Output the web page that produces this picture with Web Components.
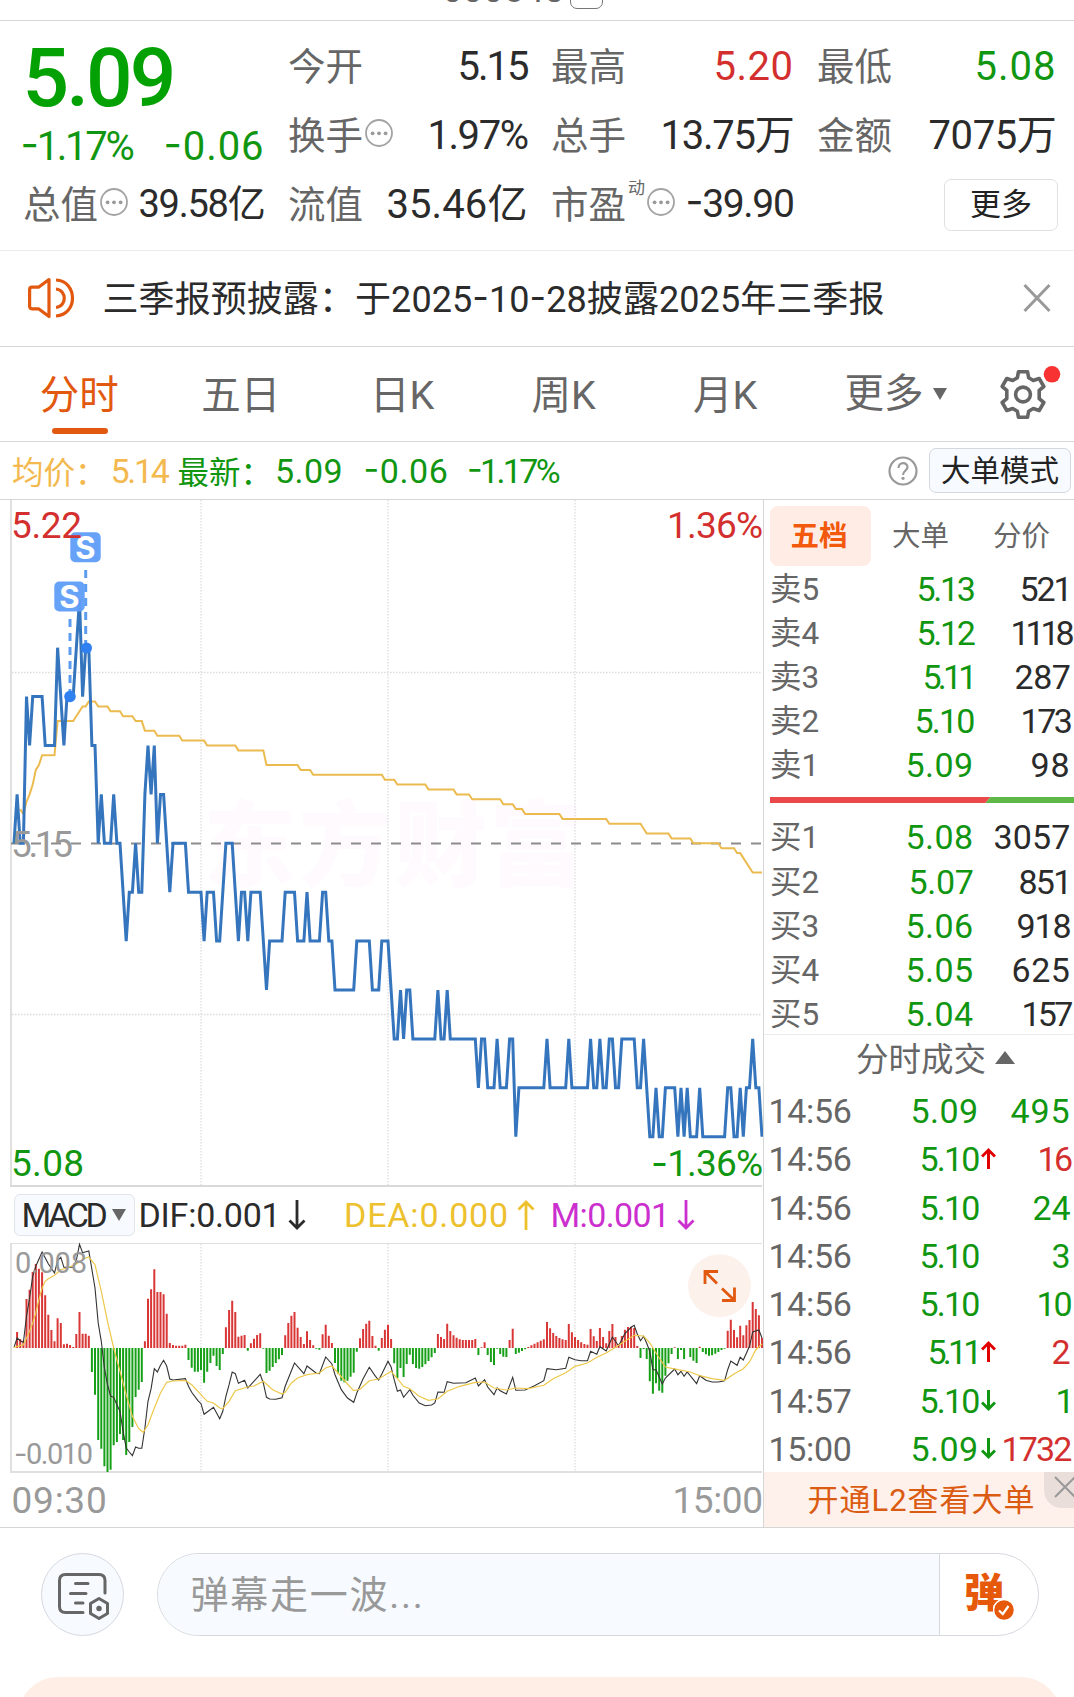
<!DOCTYPE html>
<html lang="zh-CN">
<head>
<meta charset="utf-8">
<title>分时</title>
<style>
html, body {
  margin: 0;
  padding: 0;
}
body {
  width: 1074px;
  height: 1697px;
  overflow: hidden;
  background: #fff;
  color: #2b2b2b;
  font-family: Roboto, "Noto Sans CJK SC", sans-serif;
  --up: #d32f2f;
  --down: #119611;
  --accent: #e2580f;
  --muted: #666;
  --faint: #999;
  --line: #d6d6d6;
  --panel: #f7faff;
}
</style>
</head>
<body>
<stock-page></stock-page>

<script>
// Text set to a fixed width by adjusting the tracking.
class FitText extends HTMLElement {

  static TAG = 'fit-text';

  constructor() {
    super();
    this.attachShadow({mode: 'open'});
    this.shadowRoot.innerHTML = '<style>:host { display: inline-block; white-space: nowrap; margin: 0 -1.5px; flex: none; }</style><slot></slot>';
  }

  connectedCallback() {
    this.widenMinus();
    const target = Number(this.getAttribute('w')) + 3;
    const natural = this.getBoundingClientRect().width;
    const count = [...this.textContent].length;
    this.style.letterSpacing = `${((target - natural) / count).toFixed(3)}px`;
  }

  // Roboto's hyphen is too short for a minus sign
  widenMinus() {
    if (!this.textContent.includes('-')) {
      return;
    }
    this.innerHTML = this.textContent.replace(/-/g, '<span style="font-family: Inter; vertical-align: .05em; line-height: 1">-</span>');
  }
}

class CodeStrip extends HTMLElement {

  static TAG = 'code-strip';

  constructor() {
    super();
    this.attachShadow({mode: 'open'});
    this.shadowRoot.innerHTML = `
<style>
:host { display: flex; height: 20px; border-bottom: 1px solid var(--line); align-items: flex-end; justify-content: center; overflow: hidden; box-sizing: content-box; }
div { display: flex; align-items: flex-end; gap: 7px; padding-bottom: 11px; margin-left: -27px; }
span { font-size: 36px; line-height: 36px; color: var(--muted); margin-bottom: 1px; }
i { width: 31px; height: 30px; border: 1px solid #777; border-radius: 7px; }
</style>
<div><span><fit-text w="119">000548</fit-text></span><i></i></div>`;
  }
}

class MoreDot extends HTMLElement {

  static TAG = 'more-dot';

  constructor() {
    super();
    this.attachShadow({mode: 'open'});
    this.shadowRoot.innerHTML = `
<style>
:host { display: block; width: 28px; height: 29px; }
svg { display: block; }
</style>
<svg width="28" height="29" viewBox="0 0 28 29">
  <circle cx="14" cy="14" r="13" fill="none" stroke="#a3a3a3" stroke-width="1.8"/>
  <g fill="#999"><circle cx="7.6" cy="14.3" r="1.9"/><circle cx="14" cy="14.3" r="1.9"/><circle cx="20.6" cy="14.3" r="1.9"/></g>
</svg>`;
  }
}

class QuoteHeader extends HTMLElement {

  static TAG = 'quote-header';

  constructor() {
    super();
    this.attachShadow({mode: 'open'});
    this.shadowRoot.innerHTML = `
<style>
:host {
  display: grid;
  grid-template-columns: 239px 237px 240px 237px;
  grid-template-rows: 69px 69px 69px;
  column-gap: 26px;
  padding: 11px 19px 11px 24px;
  height: 207px;
  border-bottom: 1px solid #ebebeb;
  font-size: 40px;
  line-height: 71px;
}
.last { grid-row: 1 / 3; }
.price { font-size: 82px; font-weight: 500; color: #04a104; height: 91px; line-height: 92px; }
.change { display: flex; justify-content: space-between; color: var(--down); height: 47px; line-height: 48px; margin-left: -2px; }
.cell { display: flex; align-items: center; justify-content: space-between; height: 69px; }
.label { display: flex; align-items: center; color: var(--muted); font-size: 37.500px; line-height: 72px; gap: 2px; margin-left: -1px; }
.label more-dot { margin-top: -4px; }
sup { font-size: 17px; line-height: 17px; align-self: flex-start; margin: 11px 0 0 0; }
.up { color: var(--up); }
.down { color: var(--down); }
button { margin: 0 -3px 0 auto; width: 114px; height: 52px; padding: 0; border: 1px solid #e0e0e0; border-radius: 7px; background: #fff; color: #222; font: 31px/50px Roboto, "Noto Sans CJK SC", sans-serif; }
</style>
<div class="last">
  <div class="price"><fit-text w="148">5.09</fit-text></div>
  <div class="change"><fit-text w="109">-1.17%</fit-text><fit-text w="98">-0.06</fit-text></div>
</div>
<div class="cell"><span class="label">今开</span><fit-text w="67">5.15</fit-text></div>
<div class="cell"><span class="label">最高</span><fit-text class="up" w="77">5.20</fit-text></div>
<div class="cell"><span class="label">最低</span><fit-text class="down" w="79">5.08</fit-text></div>
<div class="cell"><span class="label">换手<more-dot></more-dot></span><fit-text w="97">1.97%</fit-text></div>
<div class="cell"><span class="label">总手</span><fit-text w="130">13.75万</fit-text></div>
<div class="cell"><span class="label">金额</span><fit-text w="125">7075万</fit-text></div>
<div class="cell"><span class="label">总值<more-dot></more-dot></span><fit-text w="123" style="font-size:38px">39.58亿</fit-text></div>
<div class="cell"><span class="label">流值</span><fit-text w="138">35.46亿</fit-text></div>
<div class="cell"><span class="label">市盈<sup>动</sup><more-dot></more-dot></span><fit-text w="105" style="font-size:39px">-39.90</fit-text></div>
<div class="cell"><button>更多</button></div>`;
  }
}

class StockNotice extends HTMLElement {

  static TAG = 'stock-notice';

  constructor() {
    super();
    this.attachShadow({mode: 'open'});
    this.shadowRoot.innerHTML = `
<style>
:host { display: flex; align-items: center; height: 95px; border-bottom: 1px solid var(--line); padding: 0 22px 0 27px; font-size: 36px; line-height: 50px; }
.text { margin: 2px 0 0 29px; flex: 1; }
svg { margin-top: -2px; }
</style>
<svg width="48" height="42" viewBox="0 0 48 42" fill="none" stroke="#e2580f" stroke-width="3.2" stroke-linejoin="round">
  <path d="M22 2.5 L11.5 10.2 H5 Q2.6 10.2 2.6 12.8 V29 Q2.6 31.8 5 31.8 H11.5 L22 39.5 Z"/>
  <path d="M29 3 C51 4 51 38 29 39"/>
  <path d="M29 12 C40 13 40 29.500 29 30.500"/>
</svg>
<span class="text"><fit-text w="779">三季报预披露：于2025-10-28披露2025年三季报</fit-text></span>
<svg width="30" height="30" viewBox="0 0 30 30" stroke="#999" stroke-width="3"><path d="M2.500 2 L27.500 28 M27.500 2 L2.500 28"/></svg>`;
  }
}

class PeriodTabs extends HTMLElement {

  static TAG = 'period-tabs';

  constructor() {
    super();
    this.attachShadow({mode: 'open'});
    this.shadowRoot.innerHTML = `
<style>
:host { display: flex; height: 94px; border-bottom: 1px solid var(--line); color: var(--muted); font-size: 39.500px; line-height: 98px; }
.tab { width: 161.500px; text-align: center; position: relative; text-indent: -3px; }
.active { color: var(--accent); }
.active::after { content: ''; position: absolute; left: 52px; bottom: 7px; width: 56px; height: 6px; border-radius: 3px; background: var(--accent); }
.more { padding-left: 37px; display: flex; align-items: center; gap: 9px; width: 154px; }
.gear { padding-top: 17px; }
svg { display: block; }
</style>
<div class="tab active">分时</div>
<div class="tab">五日</div>
<div class="tab">日K</div>
<div class="tab">周K</div>
<div class="tab">月K</div>
<div class="more">更多<svg width="14" height="12" viewBox="0 0 14 12"><path d="M0 0H14L7 12Z" fill="#666"/></svg></div>
<svg class="gear" width="64" height="60" viewBox="0 -2 64 60" fill="none" stroke="#666" stroke-width="3.600" stroke-linejoin="round">
  <path d="M19.500 7.200 H28.500 L29.700 13.300 L34.300 16 L40.200 14 L44.800 22 L40.200 25.800 V34.200 L44.800 38 L40.200 46 L34.300 44 L29.700 46.700 L28.500 52.800 H19.500 L18.300 46.700 L13.700 44 L7.800 46 L3.200 38 L7.800 34.200 V25.800 L3.200 22 L7.800 14 L13.700 16 L18.300 13.300 Z" transform="translate(0 -1.500)"/>
  <circle cx="24" cy="28.500" r="7.400"/>
  <circle cx="53" cy="8.300" r="8.300" fill="#f83232" stroke="none"/>
</svg>`;
  }
}

class PriceSummary extends HTMLElement {

  static TAG = 'price-summary';

  constructor() {
    super();
    this.attachShadow({mode: 'open'});
    this.shadowRoot.innerHTML = `
<style>
:host { display: flex; align-items: center; height: 57px; border-bottom: 1px solid var(--line); padding: 0 3px 0 12px; color: var(--down); font-size: 34px; line-height: 57px; }
fit-text { padding-top: 2px; }
.cn { font-size: 31.500px; line-height: 57px; padding-top: 5px; }
.avg { color: #f3b94e; }
.avg + .avg { margin: 0 12px 0 4px; }
.now { margin: 0 22px 0 3px; }
.pct { margin-left: 20px; }
svg { margin-left: auto; }
button { margin-left: 11px; width: 142px; height: 45px; padding: 0; border: 1px solid #d3d7df; border-radius: 7px; background: var(--panel); color: #222; font: 29.500px/44px Roboto, "Noto Sans CJK SC", sans-serif; }
</style>
<span class="cn avg">均价：</span><fit-text class="avg" w="54">5.14</fit-text>
<span class="cn" style="margin-left:-2px">最新：</span><fit-text class="now" w="65">5.09</fit-text>
<fit-text w="82">-0.06</fit-text><fit-text class="pct" w="88">-1.17%</fit-text>
<svg width="30" height="30" viewBox="0 0 30 30" fill="none" stroke="#999" stroke-width="2.200">
  <circle cx="15" cy="15" r="13.500"/>
  <path d="M10.500 12 C10.500 5.500 19.500 5.800 19.500 11.300 C19.500 14.500 15 14.600 15 19"/>
  <circle cx="15" cy="22.300" r="1.600" fill="#999" stroke="none"/>
</svg>
<button>大单模式</button>`;
  }
}

// One slot per trading minute, 09:30 to 15:00.
const MINUTE = 3.1167;
const minuteX = i => (14 + i * MINUTE).toFixed(1);

// [minute, cents from previous close]
const PRICE = [
  [0,0],[1,1],[2,0],[3,0],[4,3],[5,2],[6,3],[9,3],[10,2],[13,2],[14,4],[16,2],[17,3],[19,3],[21,5],[22,3],
  [23,4],[24,4],[25,2],[26,2],[27,0],[28,1],[29,0],[31,0],[32,1],[33,0],[34,0],[36,-2],[37,-1],[38,-1],[39,0],
  [40,-1],[41,-1],[42,1],[43,2],[44,1],[45,2],[46,0],[47,1],[48,1],[49,0],[50,-1],[51,0],[55,0],[56,-1],[60,-1],
  [61,-2],[62,-1],[64,-1],[65,-2],[66,-2],[68,0],[70,0],[72,-2],[73,-1],[74,-1],[75,-2],[76,-1],[79,-1],[81,-3],
  [82,-2],[86,-2],[87,-1],[90,-1],[91,-2],[93,-2],[94,-1],[95,-2],[98,-2],[99,-1],[100,-1],[101,-2],[102,-2],
  [103,-3],[109,-3],[110,-2],[114,-2],[115,-3],[117,-3],[118,-2],[120,-2],[122,-4],[123,-4],[124,-3],[125,-4],
  [126,-3],[127,-3],[128,-4],[135,-4],[136,-3],[137,-4],[138,-4],[139,-3],[140,-4],[148,-4],[149,-5],[150,-4],
  [151,-4],[152,-5],[154,-5],[155,-4],[156,-5],[158,-5],[159,-4],[160,-4],[161,-6],[162,-5],[170,-5],[171,-4],
  [172,-5],[177,-5],[178,-4],[179,-5],[184,-5],[185,-4],[186,-5],[187,-5],[188,-4],[189,-5],[190,-5],[191,-4],
  [192,-4],[193,-5],[194,-5],[195,-4],[199,-4],[200,-5],[201,-5],[202,-4],[204,-6],[205,-6],[206,-5],[207,-6],
  [208,-6],[209,-5],[212,-5],[213,-6],[214,-5],[215,-6],[216,-5],[217,-6],[219,-6],[220,-5],[221,-6],[228,-6],
  [229,-5],[230,-5],[231,-6],[232,-6],[233,-5],[234,-6],[235,-5],[236,-5],[237,-4],[238,-5],[239,-5],[240,-6]
];

// [minute, thousandths from previous close]
const AVERAGE = [
  [2,7],[3,6],[4,8.5],[5,10],[6,12],[7,15],[8,16],[9,18],[13,18],[14,25],[19,25],[22,28],[23,28],[24,29],[26,29],
  [27,28],[30,28],[31,27],[34,27],[35,26],[38,26],[39,25],[41,25],[42,23],[45,23],[46,22],[53,22],[54,21],[61,21],
  [62,20],[71,20],[72,19],[80,19],[81,16],[91,16],[92,15],[95,15],[96,14],[118,14],[119,13],[122,13],[123,12],
  [132,12],[133,11],[141,11],[142,10],[146,10],[147,9],[156,9],[157,8],[160,8],[161,7],[163,7],[164,6],[175,6],
  [176,5],[190,5],[191,4],[201,4],[203,2],[210,2],[211,1],[217,1],[218,0],[226,0],[227,-1],[231,-1],[232,-2],
  [233,-2],[237,-6],[240,-6]
];

class MinuteChart extends HTMLElement {

  static TAG = 'minute-chart';

  constructor() {
    super();
    this.attachShadow({mode: 'open'});
    this.shadowRoot.innerHTML = `
<style>
:host { display: block; height: 687px; }
svg { display: block; font-size: 37px; }
</style>
<svg width="763" height="687" viewBox="0 0 763 687">
  <text x="203" y="379" font-size="93" font-weight="900" fill="#fefafe" textLength="380" font-family="'Noto Sans CJK SC'">东方财富</text>
  <g stroke="#dcdcdc" stroke-width="1.300" stroke-dasharray="1.500 1.500">
    <path d="M201 0V686M388 0V686M575 0V686"/>
    <path d="M12 172.500H762M12 514.500H762"/>
  </g>
  <path d="M11 0V687" stroke="#e0e0e0" stroke-width="2"/>
  <path d="M10 686H762" stroke="#d9d9d9" stroke-width="2"/>
  <path d="M11 343.500H762" stroke="#8c8c8c" stroke-width="2" stroke-dasharray="10 10"/>
  <polyline class="avg" fill="none" stroke="#ecbb50" stroke-width="2"/>
  <polyline class="price" fill="none" stroke="#3575bd" stroke-width="3"/>
  <g stroke="#5c9df0" stroke-width="3" stroke-dasharray="8 6">
    <path d="M85.700 70V146M70 119V195"/>
  </g>
  <g fill="#2f80f0"><circle cx="86.500" cy="148" r="5.500"/><circle cx="70" cy="196.500" r="5.800"/></g>
  <g fill="#5f9df9" fill-opacity=".95">
    <rect x="70.300" y="32.300" width="30.400" height="30" rx="5"/>
    <rect x="54.300" y="81.500" width="30.400" height="30" rx="5"/>
  </g>
  <g fill="#fff" font-family="Inter" font-weight="700" font-size="31" text-anchor="middle">
    <text x="85.500" y="58.500">S</text><text x="69.500" y="107.500">S</text>
  </g>
  <g fill="#d32f2f">
    <text x="11" y="38" textLength="71">5.22</text>
    <text x="667" y="38" textLength="96">1.36%</text>
  </g>
  <text x="11" y="357" fill="#999" textLength="62">5.15</text>
  <g fill="#119611">
    <text x="11" y="676" textLength="73">5.08</text>
    <text x="651" y="676" textLength="112"><tspan font-family="Inter">-</tspan>1.36%</text>
  </g>
</svg>`;
    this.plot('.price', PRICE, 48.9);
    this.plot('.avg', AVERAGE, 4.89);
  }

  plot(selector, data, step) {
    const points = data.map(([i, v]) => `${minuteX(i)},${(343.3 - v * step).toFixed(1)}`);
    this.shadowRoot.querySelector(selector).setAttribute('points', points.join(' '));
  }
}

// Histogram heights, three units to a pixel, one per minute.
const BARS = [
  0,48,27,22,147,175,228,252,238,227,158,100,54,20,89,75,11,13,9,3,42,108,43,43,37,-72,-140,-276,-302,-355,
  -372,-365,-292,-282,-258,-276,-321,-282,-237,-147,-125,-102,20,148,176,236,168,168,161,103,15,9,7,7,7,10,-36,-59,-71,-71,
  -66,-104,-71,-45,-23,-54,-66,-18,62,114,142,108,34,37,39,-8,14,28,39,44,-2,-75,-68,-57,-45,-34,-21,38,75,97,
  108,61,33,12,50,24,8,-2,-5,41,70,37,15,-45,-77,-98,-103,-98,-86,-74,-11,29,57,73,82,36,7,-8,30,55,
  70,27,-46,-90,-60,-87,-48,-20,-48,-60,-62,-57,-49,-39,-28,-15,42,33,27,73,51,38,31,26,24,24,24,24,27,-21,
  2,17,-21,-42,-51,-2,-18,-26,-27,24,58,-18,-14,-9,-4,3,8,13,17,22,26,78,59,45,36,30,26,24,72,47,
  33,24,17,12,10,57,35,21,60,33,14,51,72,33,12,36,55,63,64,60,6,-30,-3,-33,-100,-137,-106,-128,-134,-83,
  -46,-18,2,-33,-6,-33,0,-27,-38,-45,4,-12,-19,-23,-22,-17,-12,-6,-2,52,85,54,32,67,38,68,84,138,117,98,30
];

const DIF = [
  [0,2],[1,30],[2,22],[3,17],[4,95],[5,150],[6,215],[7,245],[9,288],[11,253],[13,225],[14,262],[15,272],[16,242],
  [19,242],[20,262],[21,311],[22,286],[24,291],[26,180],[27,75],[28,20],[29,-60],[30,-110],[31,-144],[32,-148],
  [33,-170],[34,-190],[35,-250],[36,-300],[37,-312],[38,-323],[39,-297],[40,-301],[41,-301],[42,-240],[43,-160],
  [44,-122],[45,-62],[46,-72],[47,-52],[48,-37],[49,-54],[50,-93],[51,-96],[55,-92],[56,-115],[57,-133],[59,-158],
  [60,-167],[61,-199],[62,-192],[64,-178],[66,-212],[67,-190],[68,-145],[69,-110],[70,-72],[71,-77],[72,-106],
  [74,-97],[75,-120],[76,-110],[79,-79],[80,-105],[81,-148],[82,-153],[84,-154],[86,-149],[87,-115],[90,-45],
  [93,-77],[94,-54],[97,-76],[98,-77],[100,-27],[102,-48],[103,-80],[105,-125],[107,-150],[109,-163],[110,-135],
  [112,-92],[114,-58],[116,-85],[117,-96],[118,-78],[120,-40],[121,-57],[122,-95],[123,-130],[124,-126],[125,-148],
  [127,-125],[128,-142],[130,-165],[132,-173],[134,-171],[135,-165],[136,-132],[138,-133],[139,-101],[141,-106],
  [145,-104],[148,-90],[149,-114],[151,-95],[152,-117],[154,-140],[155,-120],[156,-128],[158,-138],[160,-88],
  [161,-127],[164,-126],[167,-113],[170,-98],[171,-62],[174,-65],[177,-61],[178,-28],[180,-35],[182,-38],[184,-38],
  [185,-10],[187,-19],[188,4],[190,-9],[192,33],[194,7],[196,43],[198,62],[199,68],[200,42],[201,22],[202,35],
  [203,14],[204,-10],[205,-65],[206,-65],[208,-108],[209,-90],[212,-63],[213,-80],[214,-70],[215,-85],[216,-72],
  [219,-107],[220,-83],[222,-97],[224,-102],[226,-102],[228,-98],[229,-65],[230,-39],[232,-52],[233,-28],[234,-36],
  [236,5],[237,48],[239,54],[240,30]
];

const DEA = [
  [0,2],[3,10],[4,30],[5,50],[6,75],[7,105],[8,145],[9,180],[10,200],[11,208],[13,218],[15,235],[17,240],[20,252],
  [23,270],[24,273],[26,250],[28,170],[30,80],[32,0],[34,-70],[36,-140],[38,-205],[40,-242],[41.5,-253],[43,-230],
  [45,-180],[47,-135],[49,-103],[51,-99],[55,-97],[57,-110],[59,-130],[62,-160],[64,-165],[66,-180],[67,-182],
  [69,-160],[71,-128],[75,-117],[77,-114],[80,-100],[83,-125],[86,-138],[87,-133],[89,-105],[91,-90],[94,-80],
  [98,-75],[100,-60],[102,-54],[104,-75],[107,-108],[109,-128],[111,-124],[114,-98],[117,-93],[121,-70],[123,-92],
  [125,-115],[127,-122],[130,-145],[133,-157],[136,-153],[139,-130],[143,-115],[148,-103],[151,-102],[154,-120],
  [158,-126],[161,-120],[165,-122],[170,-112],[173,-92],[177,-74],[180,-55],[184,-45],[187,-28],[190,-15],[193,2],
  [196,20],[199,38],[202,36],[204,15],[207,-30],[209,-57],[213,-65],[217,-72],[220,-83],[224,-92],[228,-97],
  [231,-78],[234,-62],[236,-42],[238,-5],[240,12]
];

class MacdChart extends HTMLElement {

  static TAG = 'macd-chart';

  constructor() {
    super();
    this.attachShadow({mode: 'open'});
    this.shadowRoot.innerHTML = `
<style>
:host { display: block; }
header { display: flex; align-items: center; height: 55px; padding-left: 14px; font-size: 34px; line-height: 54px; }
.pick { display: flex; align-items: center; justify-content: center; gap: 9px; box-sizing: border-box; width: 121px; height: 42px; margin-right: 5px; border: 1px solid #e1e4ea; border-radius: 6px; background: var(--panel); }
header > svg { margin-left: 9px; }
.dea { color: #edc12d; margin-left: 38px; }
.m { color: #cb30cf; margin-left: 16px; }
svg { display: block; }
footer { display: flex; justify-content: space-between; height: 54px; padding: 0 2px 0 13px; color: var(--faint); font-size: 37px; line-height: 55px; }
.plot { font-size: 29px; }
</style>
<header>
  <span class="pick"><fit-text w="80">MACD</fit-text><svg width="14" height="12" viewBox="0 0 14 12"><path d="M0 0H14L7 12Z" fill="#666"/></svg></span>
  <fit-text w="139">DIF:0.001</fit-text>
  <svg width="18" height="32" viewBox="0 0 18 32" fill="none" stroke="#2b2b2b" stroke-width="2.800"><path d="M9 1V29M1.500 21.500L9 29L16.500 21.500"/></svg>
  <fit-text class="dea" w="162">DEA:0.000</fit-text>
  <svg width="18" height="32" viewBox="0 0 18 32" fill="none" stroke="#edc12d" stroke-width="2.800"><path d="M9 31V3M1.500 10.500L9 3L16.500 10.500"/></svg>
  <fit-text class="m" w="116">M:0.001</fit-text>
  <svg width="18" height="32" viewBox="0 0 18 32" fill="none" stroke="#cb30cf" stroke-width="2.800"><path d="M9 1V29M1.500 21.500L9 29L16.500 21.500"/></svg>
</header>
<svg class="plot" width="763" height="231" viewBox="0 0 763 231">
  <path d="M201 2V229M388 2V229M575 2V229" stroke="#dcdcdc" stroke-width="1.300" stroke-dasharray="1.500 1.500"/>
  <path d="M10 1.500H762" stroke="#e0e0e0"/>
  <path d="M11 1V231" stroke="#e0e0e0" stroke-width="2"/>
  <path d="M10 230H762" stroke="#e0e0e0" stroke-width="2"/>
  <circle cx="719.500" cy="43.700" r="31.500" fill="#fdf1ec"/>
  <path class="up" stroke="#d93636" stroke-width="2"/>
  <path class="down" stroke="#17a017" stroke-width="2"/>
  <polyline class="dif" fill="none" stroke="#333" stroke-width="1.100"/>
  <polyline class="dea-line" fill="none" stroke="#edc84a" stroke-width="1.200"/>
  <path d="M705 42V29.500H718M706 30.500L717 41.500M722 58.500H734.500V45.500M722 46.500L733.500 57.500" fill="none" stroke="#e2580f" stroke-width="2.800"/>
  <g fill="#999">
    <text x="15" y="30.500" textLength="72">0.008</text>
    <text x="14" y="221.500" textLength="79"><tspan font-family="Inter">-</tspan>0.010</text>
  </g>
</svg>
<footer><fit-text w="93">09:30</fit-text><fit-text w="87">15:00</fit-text></footer>`;
    this.plotBars('.up', h => h > 0);
    this.plotBars('.down', h => h < 0);
    this.plotLine('.dif', DIF);
    this.plotLine('.dea-line', DEA);
  }

  plotBars(selector, keep) {
    const d = BARS.map((h, i) => keep(h) ? `M${minuteX(i)} 106V${(106 - h / 3).toFixed(1)}` : '').join('');
    this.shadowRoot.querySelector(selector).setAttribute('d', d);
  }

  plotLine(selector, data) {
    const points = data.map(([i, v]) => `${minuteX(i)},${(106 - v / 3).toFixed(1)}`);
    this.shadowRoot.querySelector(selector).setAttribute('points', points.join(' '));
  }
}

// [label, price, price width, volume, volume width]
const ASKS = [
  ['卖5', '5.13', 54, '521', 48],
  ['卖4', '5.12', 54, '1118', 57],
  ['卖3', '5.11', 48, '287', 53],
  ['卖2', '5.10', 56, '173', 47],
  ['卖1', '5.09', 65, '98', 37]
];
const BIDS = [
  ['买1', '5.08', 65, '3057', 74],
  ['买2', '5.07', 62, '851', 49],
  ['买3', '5.06', 65, '918', 51],
  ['买4', '5.05', 65, '625', 56],
  ['买5', '5.04', 65, '157', 46]
];

class OrderBook extends HTMLElement {

  static TAG = 'order-book';

  constructor() {
    super();
    this.attachShadow({mode: 'open'});
    this.shadowRoot.innerHTML = `
<style>
:host { display: block; font-size: 34px; height: 534px; border-bottom: 1px solid #ebebeb; }
nav { display: flex; height: 66px; padding: 6px 0 0 6px; box-sizing: border-box; font-size: 28.500px; line-height: 62px; color: var(--muted); }
nav b { width: 101px; height: 60px; border-radius: 8px; background: #ffede5; color: #f2590c; text-align: center; text-indent: -3px; }
nav span { margin-left: 21px; }
nav span + span { margin-left: 44px; }
.row { display: grid; grid-template-columns: 48px 154px 97px; padding-left: 6px; height: 44.100px; line-height: 46px; }
.row > * { text-align: right; }
.row > .name { text-align: left; color: var(--muted); white-space: nowrap; font-size: 31.500px; line-height: 47px; }
.price { color: var(--down); }
svg { display: block; margin: 11px 0 11px 6px; }
</style>
<nav><b>五档</b><span>大单</span><span>分价</span></nav>
${ASKS.map(OrderBook.row).join('')}
<svg width="304" height="6" viewBox="0 0 304 6"><path d="M0 0H220.500L215.500 6H0Z" fill="#ea494b"/><path d="M220.500 0H304V6H215.500Z" fill="#5fb748"/></svg>
${BIDS.map(OrderBook.row).join('')}`;
  }

  static row([label, price, pw, volume, vw]) {
    return `<div class="row"><span class="name">${label}</span><span class="price"><fit-text w="${pw}">${price}</fit-text></span><span><fit-text w="${vw}">${volume}</fit-text></span></div>`;
  }
}

// [time, price, price width, arrow, volume, volume width, side]
const TICKS = [
  ['14:56', '5.09', 65, '', '495', 57, 'down'],
  ['14:56', '5.10', 56, 'up', '16', 30, 'up'],
  ['14:56', '5.10', 56, '', '24', 35, 'down'],
  ['14:56', '5.10', 56, '', '3', 16, 'down'],
  ['14:56', '5.10', 56, '', '10', 31, 'down'],
  ['14:56', '5.11', 48, 'up', '2', 16, 'up'],
  ['14:57', '5.10', 56, 'down', '1', 12, 'down'],
  ['15:00', '5.09', 65, 'down', '1732', 66, 'up']
];

class TickList extends HTMLElement {

  static TAG = 'tick-list';

  constructor() {
    super();
    this.attachShadow({mode: 'open'});
    this.shadowRoot.innerHTML = `
<style>
:host { display: block; font-size: 34px; }
header { display: flex; height: 51px; align-items: center; gap: 9px; padding-left: 92px; color: var(--muted); font-size: 32.500px; line-height: 53px; }
.row { display: grid; grid-template-columns: 81px 126px 21px 71px; align-items: center; padding-left: 6px; height: 48.300px; line-height: 50px; }
.row > * { text-align: right; }
.row > .time { text-align: left; color: var(--muted); }
.row > :last-child { justify-self: end; }
.row svg { margin-left: 4px; }
.price, .down { color: var(--down); }
.up { color: var(--up); }
svg { display: block; }
header svg { margin-top: -5px; }
</style>
<header>分时成交<svg width="20" height="14" viewBox="0 0 20 14"><path d="M10 0L20 13H0Z" fill="#666"/></svg></header>
${TICKS.map(TickList.row).join('')}`;
  }

  static row([time, price, pw, arrow, volume, vw, side]) {
    const arrows = {
      up: '<svg width="15" height="24" viewBox="0 0 15 24" fill="none" stroke="#e00000" stroke-width="3"><path d="M7.500 22V3M1 9.500L7.500 3L14 9.500"/></svg>',
      down: '<svg width="15" height="24" viewBox="0 0 15 24" fill="none" stroke="#119611" stroke-width="3"><path d="M7.500 1V20M1 13.500L7.500 20L14 13.500"/></svg>'
    };
    return `<div class="row"><span class="time"><fit-text w="80">${time}</fit-text></span><span class="price"><fit-text w="${pw}">${price}</fit-text></span><span>${arrows[arrow] || ''}</span><span class="${side}"><fit-text w="${vw}">${volume}</fit-text></span></div>`;
  }
}

class LevelBanner extends HTMLElement {

  static TAG = 'level-banner';

  constructor() {
    super();
    this.attachShadow({mode: 'open'});
    this.shadowRoot.innerHTML = `
<style>
:host { display: block; position: relative; height: 55px; background: #fef1ec; color: #dc5b12; font-size: 31px; line-height: 57px; padding-left: 45px; overflow: hidden; }
i { position: absolute; right: 0; top: 0; width: 30px; height: 36px; background: #e9deda; border-bottom-left-radius: 18px; }
svg { display: block; margin: 4px 0 0 10px; }
</style>
<fit-text w="225">开通L2查看大单</fit-text>
<i><svg width="22" height="22" viewBox="0 0 22 22" stroke="#999" stroke-width="2"><path d="M1 1L21 21M21 1L1 21"/></svg></i>`;
  }
}

class DanmuBar extends HTMLElement {

  static TAG = 'danmu-bar';

  constructor() {
    super();
    this.attachShadow({mode: 'open'});
    this.shadowRoot.innerHTML = `
<style>
:host { display: flex; gap: 33px; padding: 25px 35px 41px 41px; height: 83px; border-top: 1px solid var(--line); }
.round { box-sizing: border-box; width: 83px; height: 83px; border: 1px solid #d5d8df; border-radius: 50%; background: var(--panel); }
.field { flex: 1; display: flex; box-sizing: border-box; border: 1px solid #d5d8df; border-radius: 42px; overflow: hidden; }
.hint { flex: 1; background: var(--panel); color: var(--faint); font-size: 38px; line-height: 82px; padding-left: 34px; border-right: 1px solid #d5d8df; }
.send { position: relative; width: 98px; color: #e6580a; font-size: 40px; font-weight: 900; line-height: 80px; text-indent: 24px; }
.send svg { position: absolute; left: 53px; top: 45px; }
svg { display: block; }
</style>
<div class="round">
  <svg width="81" height="81" viewBox="0 0 81 81" fill="none" stroke="#666" stroke-width="3" stroke-linecap="round" stroke-linejoin="round">
    <path d="M41 58.500H23.500Q17.500 58.500 17.500 52.500V26.500Q17.500 20.500 23.500 20.500H57Q63 20.500 63 26.500V39"/>
    <path d="M33.500 29.500H46M28.500 39.500H44M33.500 49H41"/>
    <path d="M57 44.500L65.500 49.500V59.500L57 64.500L48.500 59.500V49.500Z"/>
    <circle cx="57" cy="54.500" r="2" fill="#666" stroke-width="1.500"/>
  </svg>
</div>
<div class="field">
  <div class="hint"><fit-text w="231">弹幕走一波...</fit-text></div>
  <div class="send">弹<svg width="22" height="22" viewBox="0 0 22 22"><circle cx="11" cy="11" r="10.500" fill="#e6580a" stroke="#fff" stroke-width="1.500"/><path d="M6 11.500L9.800 15L15.500 7" fill="none" stroke="#fff" stroke-width="2.200"/></svg></div>
</div>`;
  }
}

class StockPage extends HTMLElement {

  static TAG = 'stock-page';

  constructor() {
    super();
    this.attachShadow({mode: 'open'});
    this.shadowRoot.innerHTML = `
<style>
:host { display: block; height: 1697px; overflow: hidden; }
main { display: grid; grid-template-columns: 763px 311px; height: 1027px; }
aside { border-left: 1px solid var(--line); }
.card { height: 60px; margin: 0 13px 0 18px; border-radius: 40px 40px 0 0; background: #ffeee6; }
</style>
<code-strip></code-strip>
<quote-header></quote-header>
<stock-notice></stock-notice>
<period-tabs></period-tabs>
<price-summary></price-summary>
<main>
  <section>
    <minute-chart></minute-chart>
    <macd-chart></macd-chart>
  </section>
  <aside>
    <order-book></order-book>
    <tick-list></tick-list>
    <level-banner></level-banner>
  </aside>
</main>
<danmu-bar></danmu-bar>
<div class="card"></div>`;
  }
}

[
  FitText, CodeStrip, MoreDot, QuoteHeader, StockNotice, PeriodTabs, PriceSummary, MinuteChart,
  MacdChart, OrderBook, TickList, LevelBanner, DanmuBar, StockPage
].forEach(el => customElements.define(el.TAG, el));
</script>
</body>
</html>
